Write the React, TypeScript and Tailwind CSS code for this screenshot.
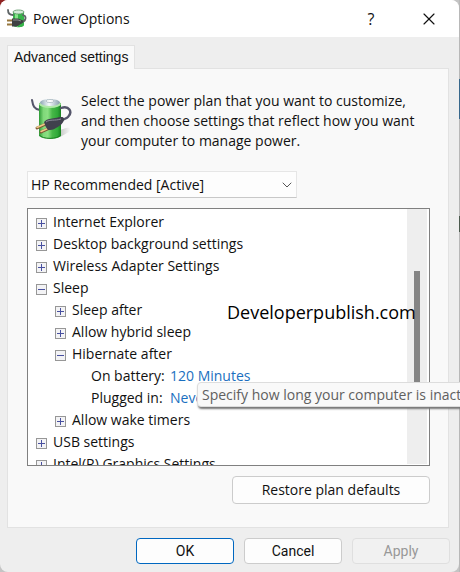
import { useState } from "react";
import { X, ChevronDown } from "lucide-react";

type TreeNode = {
    label: string;
    open?: boolean;
    children?: TreeNode[];
    values?: { name: string; value: string }[];
}

const settings: TreeNode[] = [
    { label: "Internet Explorer" },
    { label: "Desktop background settings" },
    { label: "Wireless Adapter Settings" },
    {
        label: "Sleep",
        open: true,
        children: [
            { label: "Sleep after" },
            { label: "Allow hybrid sleep" },
            {
                label: "Hibernate after",
                open: true,
                values: [
                    { name: "On battery:", value: "120 Minutes" },
                    { name: "Plugged in:", value: "Never" },
                ],
            },
            { label: "Allow wake timers" },
        ],
    },
    { label: "USB settings" },
    { label: "Intel(R) Graphics Settings" },
];

const BatteryIcon = () => (
    <svg viewBox="0 0 42 44" className="mt-1.5 h-11 w-[42px] shrink-0" aria-hidden="true">
        <defs>
            <linearGradient id="cell" x1="0" x2="1" y1="0" y2="0">
                <stop offset="0" stopColor="#2c9a35" />
                <stop offset="0.2" stopColor="#7fd879" />
                <stop offset="0.4" stopColor="#8be083" />
                <stop offset="0.6" stopColor="#47b848" />
                <stop offset="0.85" stopColor="#2fa838" />
                <stop offset="1" stopColor="#17801f" />
            </linearGradient>
            <linearGradient id="cap" x1="0" x2="1" y1="0" y2="0">
                <stop offset="0" stopColor="#8da5b4" />
                <stop offset="0.45" stopColor="#f6fafc" />
                <stop offset="1" stopColor="#879dab" />
            </linearGradient>
            <linearGradient id="shade" x1="0" x2="1" y1="0" y2="0">
                <stop offset="0" stopColor="#c6c9c6" />
                <stop offset="1" stopColor="#f9f9f9" />
            </linearGradient>
        </defs>
        <path d="M29 40l9-5c3-3 1-5-3-4l-6 2z" fill="url(#shade)" />
        <path d="M1 3c1 6 2 9 8 10" fill="none" stroke="#55566b" strokeWidth="2" strokeLinecap="round" />
        <path d="M8 6v32c0 5 22 5 22 0V6z" fill="url(#cell)" />
        <path d="M8.5 38c2 4.500 19 4.500 21 0" fill="none" stroke="#17801f" />
        <ellipse cx="19" cy="7" rx="11" ry="4" fill="#b0e8a8" />
        <ellipse cx="19" cy="5.5" rx="10" ry="3.5" fill="url(#cap)" />
        <ellipse cx="19" cy="4" rx="4" ry="1.5" fill="#fff" stroke="#8ca0aa" strokeWidth="0.6" />
        <path d="M30 11c8-3 12 4 7 9-2 2-5 2-7 4" fill="none" stroke="#55566b" strokeWidth="2.4" strokeLinecap="round" />
        <path d="M6 31l9-4M10 35l9-4" stroke="#7d5733" strokeWidth="3" strokeLinecap="round" />
        <path d="M6 30.5l9-4M10 34.5l9-4" stroke="#efc888" strokeWidth="1.5" strokeLinecap="round" />
        <path d="M13 25c4-4 7-3 11-4 5-1 9-2 9 1 0 4-4 7-8 9-3 2-5 2-8 2-2-2-3-5-4-8z" fill="#40414d" />
        <path d="M15 25c4-3 9-1 15-3" fill="none" stroke="#8c8c9b" />
    </svg>
)

const TitleIcon = () => (
    <svg viewBox="0 0 20 20" className="size-5" aria-hidden="true">
        <path d="M6 3v13c0 3 11 3 11 0V3z" fill="#36b54a" />
        <path d="M8 4v13l3 1V4z" fill="#86e38a" />
        <ellipse cx="11.5" cy="3" rx="5.5" ry="2" fill="#d3ebd8" stroke="#57925f" strokeWidth="0.8" />
        <path d="M1 1c0 4 2 5 5 5M16 6c4 1 3 6-1 7" fill="none" stroke="#5f6567" strokeWidth="1.8" strokeLinecap="round" />
        <path d="M0 11.5h6M0 15.5h6" stroke="#96763d" strokeWidth="2" />
        <path d="M5 9.5h6l5 2c1 2-1 3-3 4l-3 2H5z" fill="#3f4143" />
        <path d="M6 11h5l3 1" fill="none" stroke="#8d9192" />
    </svg>
)

const TreeItem = (props: { node: TreeNode }) => {
    const { node } = props;
    const [open, setOpen] = useState(!!node.open);

    return (
        <li>
            <button type="button" aria-expanded={open} onClick={() => setOpen(!open)} className="flex h-[22px] items-center gap-1.5 whitespace-nowrap">
                <svg viewBox="0 0 11 11" className="mt-0.5 size-[11px]" shapeRendering="crispEdges" aria-hidden="true">
                    <rect x="0.5" y="0.5" width="10" height="10" fill="#f3f3f5" stroke="#979797" />
                    <path d={open ? "M2 5.5h7" : "M2 5.5h7M5.5 2v7"} stroke="#4850a0" />
                </svg>
                {node.label}
            </button>
            {open && node.children && (
                <ul className="pl-[19px]">
                    {node.children.map((child) => (
                        <TreeItem key={child.label} node={child} />
                    ))}
                </ul>
            )}
            {open && node.values && (
                <ul className="pl-9">
                    {node.values.map((item) => (
                        <li key={item.name} className="flex h-[22px] items-center">
                            <span className="w-[79px]">{item.name}</span>
                            <a href="#" className="text-[#1a6fc0]">{item.value}</a>
                        </li>
                    ))}
                </ul>
            )}
        </li>
    )
}

const App = () => {
    return (
        <div className="relative overflow-hidden bg-[linear-gradient(135deg,#8f2222_20px,#c4c4c4_20px)] font-['Open_Sans',sans-serif] text-sm text-[#111]">
            <div className="bg-[linear-gradient(#b8b8b8_79px,#37678b_79px,#37678b_119px,#b8b8b8_119px,#b8b8b8_216px,#4c5a4e_216px,#4c5a4e_232px,#b8b8b8_232px)] bg-[length:1px_100%] bg-right bg-no-repeat pr-px">
                <div className="rounded-lg bg-[#eeeeee] pb-2">
                    <header className="flex h-[37px] items-center gap-1.5 rounded-t-lg bg-white pr-[22px] pl-[7px]">
                        <TitleIcon />
                        <h1 className="grow">Power Options</h1>
                        <button type="button" aria-label="Help" className="w-6 text-base">?</button>
                        <button type="button" aria-label="Close" className="ml-8 flex w-4 justify-center">
                            <X className="size-4 scale-125" strokeWidth={1.4} />
                        </button>
                    </header>

                    <main className="pt-2 pr-[10px] pl-[7px]">
                        <div role="tablist" className="flex">
                            <button type="button" role="tab" aria-selected="true" className="relative z-10 -mb-px h-6 border border-b-0 border-[#e2e2e2] bg-[#f9f9f9] px-1.5 pb-0.5 font-['Liberation_Sans',sans-serif]">
                                Advanced settings
                            </button>
                        </div>

                        <section className="border border-[#e2e2e2] bg-[#f9f9f9] pt-[22px] pr-[18px] pb-[23px] pl-[19px]">
                            <div className="flex gap-2 pl-1">
                                <BatteryIcon />
                                <p className="max-w-[340px] leading-5">
                                    Select the power plan that you want to customize, and then choose settings that reflect how you want your computer to manage power.
                                </p>
                            </div>

                            <div className="relative mt-5 w-[270px]">
                                <select aria-label="Power plan" className="h-[27px] w-full appearance-none border border-[#e6e6e6] border-b-[#c8c8c8] bg-[#fdfdfd] pl-[3px]">
                                    <option>HP Recommended [Active]</option>
                                </select>
                                <ChevronDown className="pointer-events-none absolute top-1.5 right-0.5 size-4 text-[#555]" strokeWidth={1.5} />
                            </div>

                            <div className="mt-2.5 flex h-[258px] border border-[#808080] bg-white">
                                <ul className="grow overflow-hidden pt-0.5 pl-2">
                                    {settings.map((node) => (
                                        <TreeItem key={node.label} node={node} />
                                    ))}
                                </ul>
                                <div className="mr-0.5 mb-px flex w-5 justify-center bg-[#eeeeee] pt-[62px]">
                                    <div className="h-32 w-1.5 bg-[#858585]" />
                                </div>
                            </div>

                            <div className="mt-2.5 flex justify-end">
                                <button type="button" className="h-7 w-[198px] rounded border border-[#cccccc] bg-[#fdfdfd]">
                                    Restore plan defaults
                                </button>
                            </div>
                        </section>
                    </main>

                    <footer className="mt-2.5 flex justify-end gap-2.5 pr-[9px] font-['Roboto',sans-serif]">
                        <button type="button" className="h-[26px] w-[98px] rounded border border-[#0067c0] bg-[#fdfdfd]">OK</button>
                        <button type="button" className="h-[26px] w-[98px] rounded border border-[#cccccc] bg-[#fdfdfd]">Cancel</button>
                        <button type="button" disabled className="h-[26px] w-[98px] rounded border border-[#dfdfdf] bg-[#f1f1f1] text-[#989898]">Apply</button>
                    </footer>
                </div>
            </div>

            <span className="absolute top-[298px] left-[227px] text-lg text-black">Developerpublish.com</span>
            <div role="tooltip" className="absolute top-[382px] left-[197px] h-[25px] rounded border border-[#dddddd] bg-[#f9f9f9] px-1 leading-6 whitespace-nowrap text-[#606060] shadow-[1px_2px_2px_#777]">
                Specify how long your computer is inactive
            </div>
        </div>
    )
}

export default App
